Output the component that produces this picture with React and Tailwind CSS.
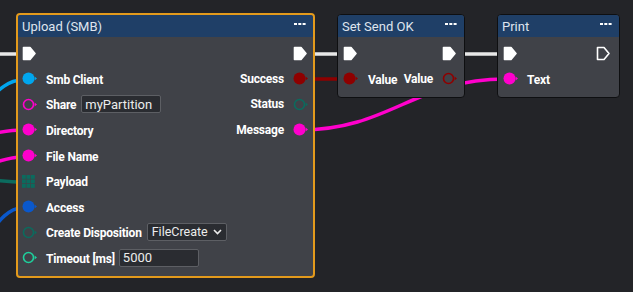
import React from "react";

function ExecPin({ filled = true }) {
  return (
    <svg width="15" height="15" viewBox="0 0 15 15" className="shrink-0">
      <path
        d="M1.5 1.5 H8 L13 7.5 L8 13.5 H1.5 Z"
        fill={filled ? "#ffffff" : "none"}
        stroke="#ffffff"
        strokeWidth="1.6"
        strokeLinejoin="round"
      />
    </svg>
  );
}

function DataPin({ color, filled = true }) {
  return (
    <svg width="15" height="13" viewBox="0 0 15 13" className="shrink-0">
      {filled ? (
        <circle cx="6.5" cy="6.5" r="6" fill={color} />
      ) : (
        <circle cx="6.5" cy="6.5" r="5" fill="none" stroke={color} strokeWidth="1.6" />
      )}
      <path d="M12.6 4.6 L15 6.5 L12.6 8.4 Z" fill={color} />
    </svg>
  );
}

function GridPin({ color }) {
  const p = [0, 4.5, 9];
  return (
    <svg width="15" height="13" viewBox="0 0 15 13" className="shrink-0">
      {p.map((y) =>
        p.map((x) => (
          <rect key={`${x}-${y}`} x={x} y={y} width="3.8" height="3.8" fill={color} />
        ))
      )}
    </svg>
  );
}

function Dots() {
  return (
    <svg width="12" height="3" viewBox="0 0 12 3">
      <rect x="0" y="0" width="3" height="2" fill="#ffffff" />
      <rect x="4.3" y="0" width="3" height="2" fill="#ffffff" />
      <rect x="8.6" y="0" width="3" height="2" fill="#ffffff" />
    </svg>
  );
}

function Header({ title }) {
  return (
    <div className="flex h-[22px] items-center justify-between bg-[#1f3f67] pl-[4px] pr-[7px] rounded-t-[3px]">
      <span className="text-[13px] leading-none text-[#dfe5ee]">{title}</span>
      <span className="mb-[4px]">
        <Dots />
      </span>
    </div>
  );
}

function Label({ children }) {
  return (
    <span className="text-[12px] font-bold leading-none tracking-[-0.2px] text-white whitespace-nowrap">
      {children}
    </span>
  );
}

function TextBox({ value, w = "w-[80px]" }) {
  return (
    <div className={`${w} flex h-[18px] items-center rounded-[2px] border border-[#5d5f64] bg-[#2a2c31] pl-[3px] text-[13px] leading-none text-[#ececec]`}>
      {value}
    </div>
  );
}

function SelectBox({ value }) {
  return (
    <div className="flex h-[18px] w-[80px] items-center justify-between rounded-[2px] border border-[#5d5f64] bg-[#2a2c31] pl-[4px] pr-[4px] text-[12.5px] leading-none text-[#ececec]">
      <span>{value}</span>
      <svg width="9" height="6" viewBox="0 0 9 6">
        <path d="M1 1 L4.5 4.5 L8 1" fill="none" stroke="#ececec" strokeWidth="1.6" />
      </svg>
    </div>
  );
}

const MAG = "#ff00cc";
const RED = "#8e0000";
const TEAL = "#0b6b5e";

function Row({ left, right, h = "h-[25.6px]" }) {
  return (
    <div className={`flex ${h} items-center justify-between`}>
      <div className="flex items-center">{left}</div>
      <div className="flex items-center">{right}</div>
    </div>
  );
}

function Wires() {
  return (
    <svg className="absolute inset-0" width="633" height="292" viewBox="0 0 633 292">
      <g fill="none" strokeLinecap="butt">
        <path d="M-5 54 H22" stroke="#e8e8e8" strokeWidth="3.5" />
        <path d="M300 54 H345" stroke="#e8e8e8" strokeWidth="3.5" />
        <path d="M450 54 H505" stroke="#e8e8e8" strokeWidth="3.5" />
        <path d="M300 79 H345" stroke={RED} strokeWidth="3.5" />
        <path d="M300 130 C390 130 415 79 505 79" stroke={MAG} strokeWidth="3.5" />
        <path d="M-25 112 C-8 98 4 80 22 80" stroke="#00a6ee" strokeWidth="3.5" />
        <path d="M-25 136 C-8 135 4 130 22 130" stroke={MAG} strokeWidth="3.5" />
        <path d="M-25 168 C-8 165 4 157 22 157" stroke={MAG} strokeWidth="3.5" />
        <path d="M-25 179 C-8 179 4 182 22 182" stroke={TEAL} strokeWidth="3.5" />
        <path d="M-25 250 C-8 232 4 208 22 208" stroke="#0a58cc" strokeWidth="3.5" />
      </g>
    </svg>
  );
}

export default function App() {
  return (
    <div className="relative h-[292px] w-[633px] overflow-hidden bg-[#232428] font-[Roboto,'Liberation_Sans',sans-serif]">
      <Wires />

      {/* Upload (SMB) */}
      <div className="absolute left-[16px] top-[13px] w-[299px] h-[265px] rounded-[4px] border-2 border-[#e39a1c] bg-[#404248]">
        <Header title="Upload (SMB)" />
        <div className="pl-[4px] pr-[5px] pt-[4px]">
          <Row h="h-[25px]" left={<ExecPin />} right={<ExecPin />} />
          <Row
            left={<><DataPin color="#00a6ee" /><span className="ml-[9px]"><Label>Smb Client</Label></span></>}
            right={<><Label>Success</Label><span className="ml-[9px]"><DataPin color={RED} /></span></>}
          />
          <Row
            left={<><DataPin color={MAG} filled={false} /><span className="ml-[9px] mr-[5px]"><Label>Share</Label></span><TextBox value="myPartition" /></>}
            right={<><Label>Status</Label><span className="ml-[9px]"><DataPin color={TEAL} filled={false} /></span></>}
          />
          <Row
            left={<><DataPin color={MAG} /><span className="ml-[9px]"><Label>Directory</Label></span></>}
            right={<><Label>Message</Label><span className="ml-[9px]"><DataPin color={MAG} /></span></>}
          />
          <Row left={<><DataPin color={MAG} /><span className="ml-[9px]"><Label>File Name</Label></span></>} right={null} />
          <Row left={<><GridPin color={TEAL} /><span className="ml-[9px]"><Label>Payload</Label></span></>} right={null} />
          <Row left={<><DataPin color="#0a58cc" /><span className="ml-[9px]"><Label>Access</Label></span></>} right={null} />
          <Row
            left={<><DataPin color={TEAL} filled={false} /><span className="ml-[9px] mr-[5px]"><Label>Create Disposition</Label></span><SelectBox value="FileCreate" /></>}
            right={null}
          />
          <Row
            left={<><DataPin color="#1ed09c" filled={false} /><span className="ml-[9px] mr-[4px]"><Label>Timeout [ms]</Label></span><TextBox value="5000" /></>}
            right={null}
          />
        </div>
      </div>

      {/* Set Send OK */}
      <div className="absolute left-[337px] top-[14px] w-[128px] h-[84px] rounded-[4px] border border-[#0e0f11] bg-[#404248]">
        <Header title="Set Send OK" />
        <div className="pl-[5px] pr-[7px] pt-[4px]">
          <Row h="h-[25px]" left={<ExecPin />} right={<ExecPin />} />
          <Row
            left={<><DataPin color={RED} /><span className="ml-[10px]"><Label>Value</Label></span></>}
            right={<><Label>Value</Label><span className="ml-[9px]"><DataPin color={RED} filled={false} /></span></>}
          />
        </div>
      </div>

      {/* Print */}
      <div className="absolute left-[497px] top-[14px] w-[123px] h-[84px] rounded-[4px] border border-[#0e0f11] bg-[#404248]">
        <Header title="Print" />
        <div className="pl-[5px] pr-[8px] pt-[4px]">
          <Row h="h-[25px]" left={<ExecPin />} right={<ExecPin filled={false} />} />
          <Row left={<><DataPin color={MAG} /><span className="ml-[9px]"><Label>Text</Label></span></>} right={null} />
        </div>
      </div>
    </div>
  );
}
